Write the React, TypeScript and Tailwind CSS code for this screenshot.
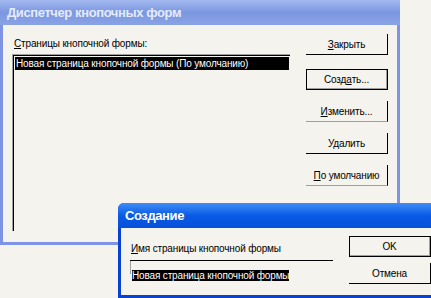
import React from 'react';

const font = "font-['Liberation_Sans',Arial,sans-serif]";
const small = 'text-[10px] tracking-[-0.15px]';

interface ButtonProps {
  children: React.ReactNode;
  isDefault?: boolean;
  soft?: boolean;
  className?: string;
}

const XpButton: React.FC<ButtonProps> = ({ children, isDefault, soft, className }) => {
  const frame = isDefault
    ? 'border border-black'
    : soft
      ? 'border-r border-b border-r-black border-b-[#a0a0a0]'
      : 'border-r border-b border-black';

  return (
    <div className={`w-[82px] h-[21px] flex items-center justify-center ${small} text-black bg-[#f4f3ee] ${frame} ${className ?? ''}`}>
      <div className={`w-full h-full flex items-center justify-center ${isDefault ? 'border-r border-b border-[#a0a0a0]' : ''}`}>
        {children}
      </div>
    </div>
  );
};

const App: React.FC = () => {
  return (
    <div className={`relative w-[431px] h-[298px] overflow-hidden bg-[#f4f3ee] ${font} select-none`}>
      {/* switchboard manager, inactive */}
      <div className="absolute left-0 top-0 w-[400px] h-[245px] flex flex-col bg-[#7e93e3]">
        <div className="h-[25px] flex items-center px-[7px] bg-gradient-to-b from-[#a3b8ee] via-[#7b97e0] to-[#8aa3e6]">
          <span className="text-[13px] font-bold text-[#e4ecfb] tracking-[-0.4px]">Диспетчер кнопочных форм</span>
        </div>
        <div className="flex-1 mx-[3px] mb-[3px] bg-[#f4f3ee] flex items-start">
          <div className="pl-[9px] pt-[12px] flex flex-col">
            <div className={`ml-[2px] h-[13px] leading-[13px] ${small} text-black`}>
              <u>С</u>траницы кнопочной формы:
            </div>
            <div className="mt-[4px] w-[278px] h-[177px] border-t border-l border-[#a0a0a0] bg-[#f4f3ee]">
              <div className="w-full h-full border-t border-l border-black p-px">
                <div className={`h-[13px] leading-[13px] bg-black text-white ${small} pl-[1px] whitespace-nowrap`}>
                  Новая страница кнопочной формы (По умолчанию)
                </div>
              </div>
            </div>
          </div>
          <div className="ml-[16px] pt-[9px] flex flex-col">
            <XpButton><u>З</u>акрыть</XpButton>
            <XpButton isDefault className="mt-[14px]">Созд<u>а</u>ть...</XpButton>
            <XpButton soft className="mt-[11px]"><u>И</u>зменить...</XpButton>
            <XpButton className="mt-[11px]">Удалить</XpButton>
            <XpButton soft className="mt-[11px]"><u>П</u>о умолчанию</XpButton>
          </div>
        </div>
      </div>

      {/* create dialog, active */}
      <div className="absolute left-[118px] top-[203px] w-[320px] h-[95px] flex flex-col bg-[#0842d3] rounded-t-[6px]">
        <div className="h-[25px] flex items-center px-[7px] rounded-t-[6px] bg-gradient-to-b from-[#3d8cf6] via-[#0a5ae6] to-[#0650da]">
          <span className="text-[13px] font-bold text-white tracking-[-0.4px]">Создание</span>
        </div>
        <div className="flex-1 mx-[3px] mb-[3px] bg-[#f4f3ee] flex items-start">
          <div className="pl-[10px] pt-[14px] flex flex-col">
            <div className={`h-[13px] leading-[13px] ${small} text-black whitespace-nowrap`}>
              <u>И</u>мя страницы кнопочной формы
            </div>
            <div className="mt-[5px] -ml-px w-[203px] h-[14px] border-t border-black">
              <div className="h-full border-l border-[#a0a0a0] pl-px pt-px">
                <span className={`inline-block h-[11px] leading-[11px] bg-black text-white ${small} whitespace-nowrap`}>
                  Новая страница кнопочной формы
                </span>
              </div>
            </div>
          </div>
          <div className="ml-[16px] pt-[8px] flex flex-col">
            <XpButton isDefault className="w-[70px]">OK</XpButton>
            <XpButton className="w-[70px] mt-[6px]">Отмена</XpButton>
          </div>
        </div>
      </div>
    </div>
  );
};

export default App;
